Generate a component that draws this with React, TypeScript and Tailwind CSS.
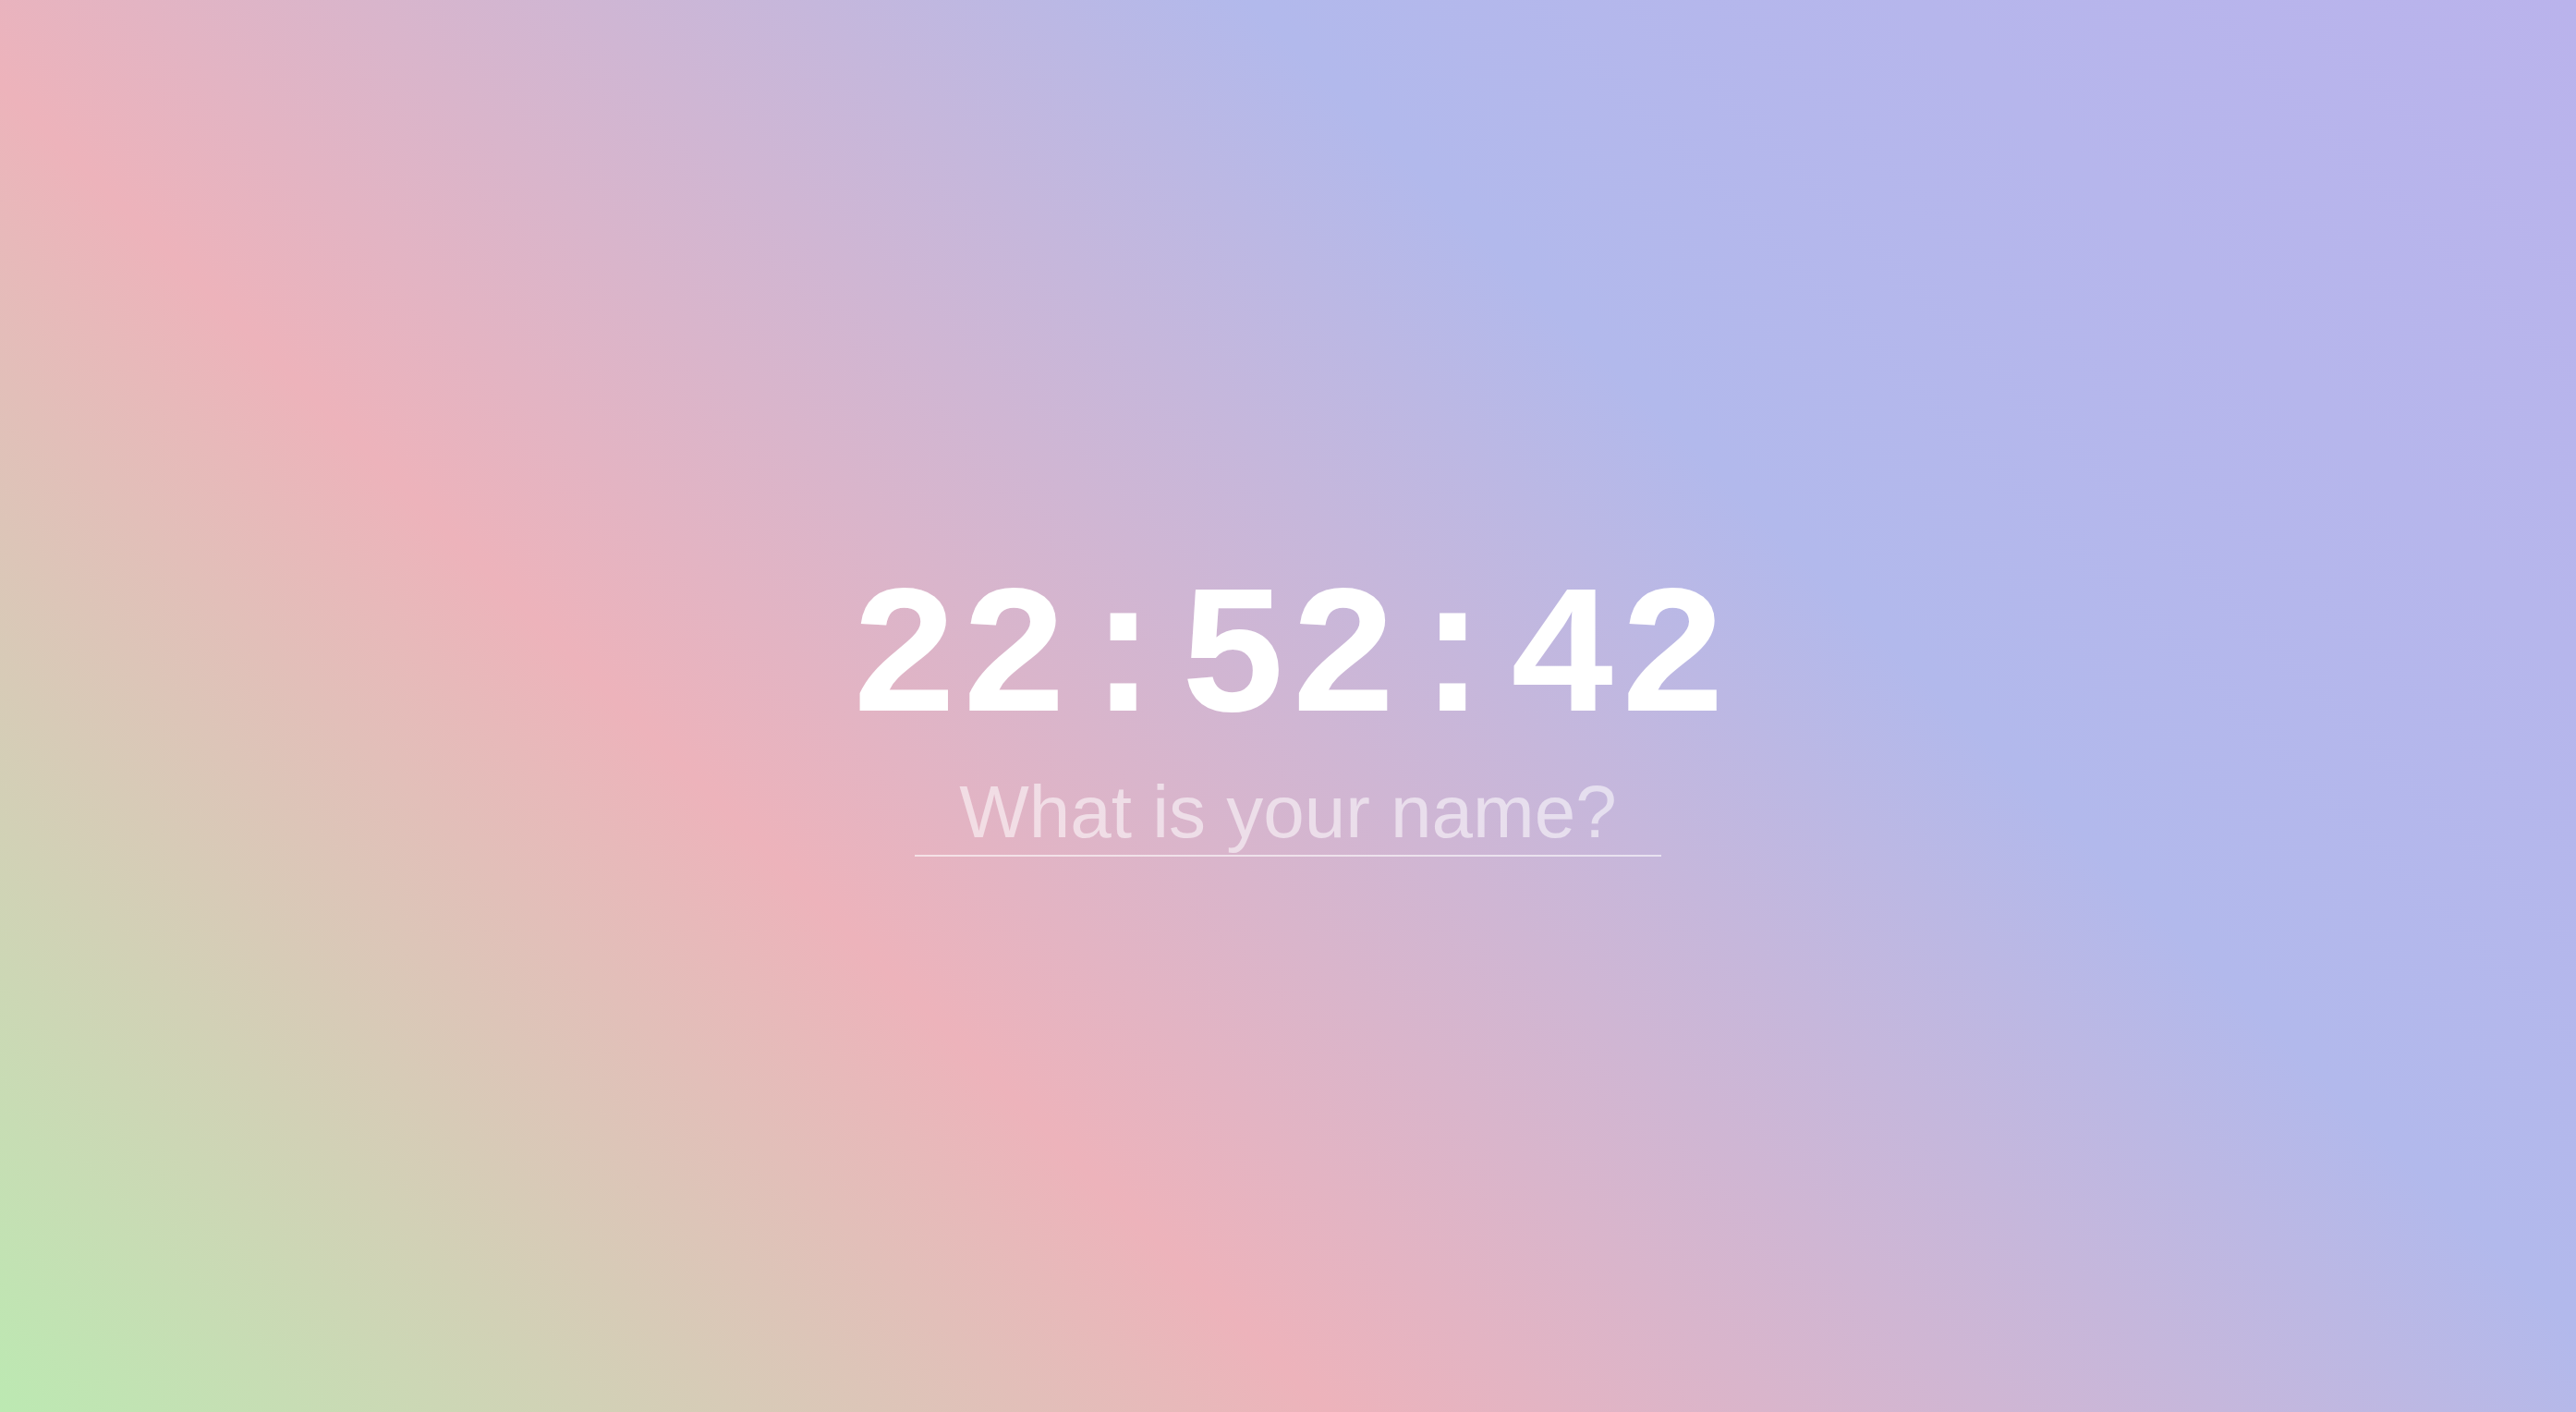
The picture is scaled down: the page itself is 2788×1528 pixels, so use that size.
import React, { useState } from "react";

export default function App() {
  const [name, setName] = useState("");
  return (
    <div className="min-h-screen w-full bg-[linear-gradient(45deg,#bce9b2_0%,#edb3bb_33.3%,#b2b9ec_66.7%,#bab3ec_100%)] flex flex-col items-center justify-center pt-[16px]">
      <div className="text-white font-bold text-[198px] leading-none tracking-normal select-none font-['Liberation_Mono','DejaVu_Sans_Mono',monospace]">
        22:52:42
      </div>
      <input
        value={name}
        onChange={(e) => setName(e.target.value)}
        placeholder="What is your name?"
        className="mt-[18px] w-[808px] bg-transparent text-center text-[80px] leading-[normal] text-white placeholder:text-white/55 border-0 border-b-2 border-white/60 outline-none p-0 font-['Liberation_Sans',Arial,sans-serif]"
      />
    </div>
  );
}
